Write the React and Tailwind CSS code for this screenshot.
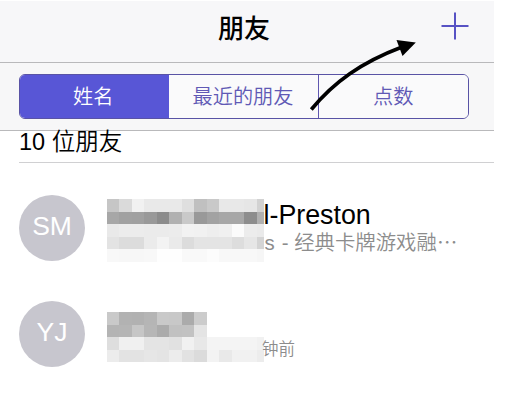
const tabs = [
  { label: "姓名", width: "w-[148.5px]", active: true },
  { label: "最近的朋友", width: "w-[150px]" },
  { label: "点数", width: "flex-1" },
];

const friends = [
  {
    initials: "SM",
    name: "l-Preston",
    detail: "- 经典卡牌游戏融⋯",
    mosaic: [
      "c6 da f1 e9 e9 e9 df c0 c9 e8 e8 e6 d2",
      "a7 a1 a0 99 8c b1 c9 99 a2 a7 a7 8d b0",
      "e9 ec ec eb eb ec f2 f1 ee f0 fb ec ea",
      "e3 dc dc eb f3 ea dc e4 e4 e4 dd e6 d4",
      "f8 f7 f7 f8 fe fe f9 f9 fc f8 f8 f8 f6",
    ],
  },
  {
    initials: "YJ",
    name: "",
    detail: "钟前",
    mosaic: [
      "c9 b2 b1 b5 c9 c8 ab cc",
      "b4 b5 c6 b6 ab c1 c2 e4",
      "de f0 f0 e4 e4 e1 f1 e8 f4 f4 f4 f4 f1",
      "ec e3 e3 e6 e4 ec e2 db f3 e9 f1 f1 ec",
    ],
  },
];

function Mosaic({ rows }) {
  return (
    <div className="w-[157px] shrink-0 overflow-hidden">
      {rows.map((row, i) => (
        <div key={i} className="flex h-[12.5px]">
          {row.split(" ").map((shade, j) => (
            <span
              key={j}
              className="h-full w-[12.5px] shrink-0"
              style={{ backgroundColor: `#${shade}${shade}${shade}` }}
            />
          ))}
        </div>
      ))}
    </div>
  );
}

function FriendRow({ friend }) {
  return (
    <li className="flex h-[106px] items-start">
      <div className="flex size-[66px] shrink-0 items-center justify-center rounded-full bg-[#c7c6ce] pb-[2px] text-[26.5px] text-white">
        {friend.initials}
      </div>
      <div className={`ml-[21.5px] ${friend.name ? "mt-[4px]" : "mt-[11px]"}`}>
        <Mosaic rows={friend.mosaic} />
      </div>
      {friend.name ? (
        <div className="mt-[4px] whitespace-nowrap">
          <p className="text-[26.8px] leading-[32px] text-black">{friend.name}</p>
          <p className="ml-px text-[20.4px] font-[350] leading-[24px] text-[#8c8c8c]">
            <span className="mr-[7px]">s</span>
            {friend.detail}
          </p>
        </div>
      ) : (
        <p className="-ml-[1.5px] mt-[36px] text-[16.5px] font-[350] leading-[24px] text-[#8c8c8c]">
          {friend.detail}
        </p>
      )}
    </li>
  );
}

export default function App() {
  return (
    <div className="relative h-[404px] w-[506px] overflow-hidden bg-white pt-px font-['Liberation_Sans','Noto_Sans_CJK_SC',sans-serif]">
      <div className="w-[494px]">
        <header className="grid h-[62px] grid-cols-[1fr_auto_1fr] items-center border-b border-[#b9b9bb] bg-[#f7f7f9]">
          <span />
          <h1 className="-ml-[6px] -mt-[6px] text-[26px] font-medium leading-none text-black">朋友</h1>
          <button type="button" aria-label="添加朋友" className="mr-[25px] -mt-[11px] justify-self-end">
            <svg width="28" height="28" viewBox="0 0 28 28" stroke="#5752c4" strokeWidth="2">
              <path d="M14 0.5V27.5M0.5 14H27.5" />
            </svg>
          </button>
        </header>

        <div className="h-[68px] border-b border-[#b9b9bb] bg-[#f7f7f8] pl-[19px] pt-[11px]">
          <div className="flex h-[45px] w-[450px] overflow-hidden rounded-[6px] border-[1.5px] border-[#5953a5]">
            {tabs.map((tab) => (
              <button
                key={tab.label}
                type="button"
                className={`${tab.width} ${
                  tab.active
                    ? "bg-[#5856d6] pr-[2px] text-white"
                    : "border-r-[1.5px] border-[#5f57b0] bg-[#fafafb] text-[#6059b5] last:border-r-0"
                } pt-[2px] text-[20.2px] font-[350] leading-none`}
              >
                {tab.label}
              </button>
            ))}
          </div>
        </div>

        <main className="pl-[19px]">
          <h2 className="h-[32px] border-b border-[#d0d0d2] text-[23.5px] font-[350] leading-[22px] text-black">
            10 位朋友
          </h2>
          <ul className="pt-[32px]">
            {friends.map((friend) => (
              <FriendRow key={friend.initials} friend={friend} />
            ))}
          </ul>
        </main>
      </div>

      <svg
        className="pointer-events-none absolute left-[300px] top-[30px]"
        width="130"
        height="90"
        viewBox="0 0 130 90"
      >
        <path d="M11.3 79.5C34 52 61 32.5 102 17" fill="none" stroke="#000" strokeWidth="3.7" />
        <path d="M96.5 10L115.8 12.4L102.5 26Z" />
      </svg>
    </div>
  );
}
